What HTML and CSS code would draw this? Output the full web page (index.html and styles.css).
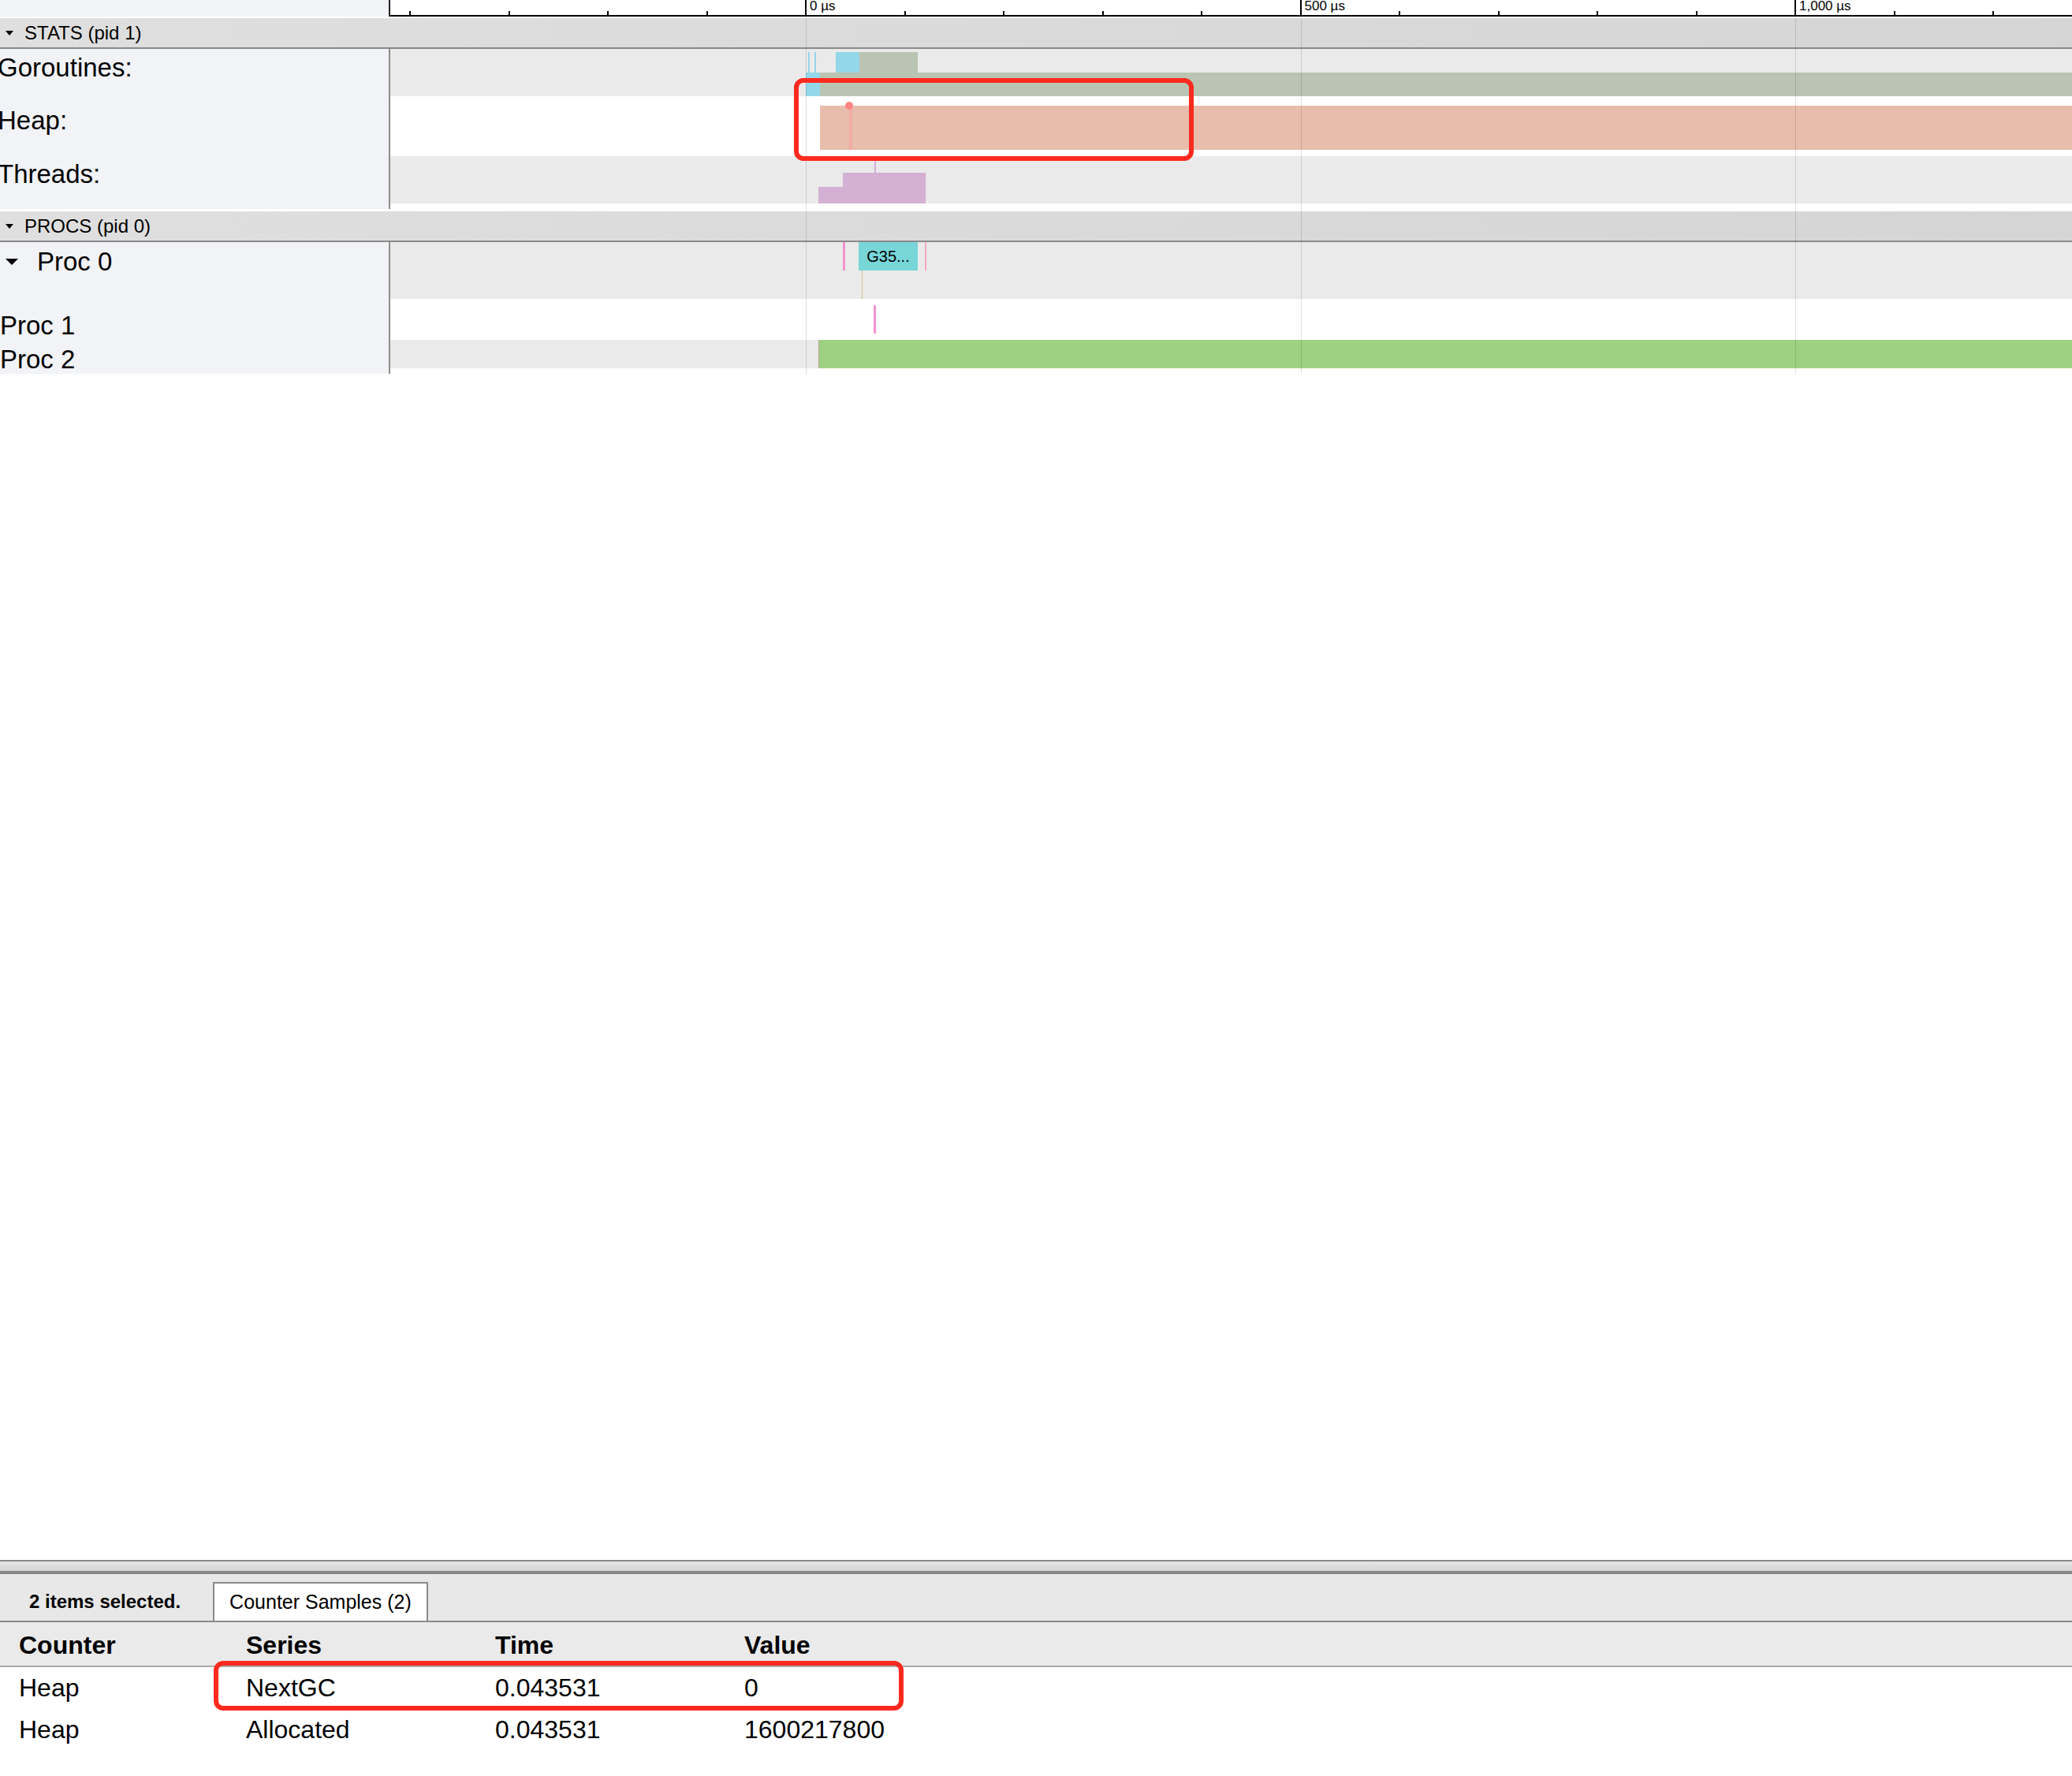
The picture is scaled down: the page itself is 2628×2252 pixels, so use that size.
FILE: index.html
```html
<!DOCTYPE html>
<html lang="en">
<head>
    <meta charset="UTF-8">
    <meta name="viewport" content="width=device-width, initial-scale=1.0">
    <title>Trace Viewer</title>
    <link rel="stylesheet" href="styles.css">
</head>
<body>
    <!-- Timeline -->
    <div class="timeline">
        <div class="ruler">
            <div class="ruler-gutter"></div>
            <div class="ruler-track">
                <span class="tick" style="left:25px"></span>
                <span class="tick" style="left:150.5px"></span>
                <span class="tick" style="left:276px"></span>
                <span class="tick" style="left:401.5px"></span>
                <span class="tick major" style="left:527px"><span class="tick-label">0 µs</span></span>
                <span class="tick" style="left:652.5px"></span>
                <span class="tick" style="left:778px"></span>
                <span class="tick" style="left:903.5px"></span>
                <span class="tick" style="left:1029px"></span>
                <span class="tick major" style="left:1154.5px"><span class="tick-label">500 µs</span></span>
                <span class="tick" style="left:1280px"></span>
                <span class="tick" style="left:1405.5px"></span>
                <span class="tick" style="left:1531px"></span>
                <span class="tick" style="left:1656.5px"></span>
                <span class="tick major" style="left:1782px"><span class="tick-label">1,000 µs</span></span>
                <span class="tick" style="left:1907.5px"></span>
                <span class="tick" style="left:2033px"></span>
            </div>
        </div>

        <!-- STATS process -->
        <div class="process-header stats"><span class="caret"></span>STATS (pid 1)</div>

        <div class="track goroutines">
            <div class="track-label"><span class="track-name">Goroutines:</span></div>
            <div class="track-body shade">
                <div class="slice blue" style="left:530px;top:4px;width:2px;height:26px"></div>
                <div class="slice blue" style="left:538px;top:4px;width:2px;height:26px"></div>
                <div class="slice blue" style="left:565px;top:4px;width:30px;height:26px"></div>
                <div class="slice sage" style="left:595px;top:4px;width:74px;height:26px"></div>
                <div class="slice blue" style="left:527px;top:30px;width:18px;height:30px"></div>
                <div class="slice sage" style="left:545px;right:0;top:30px;height:30px"></div>
            </div>
        </div>

        <div class="track heap">
            <div class="track-label"><span class="track-name">Heap:</span></div>
            <div class="track-body">
                <div class="slice salmon" style="left:545px;right:0;top:12px;height:56px"></div>
                <div class="slice sample-line" style="left:582px;top:12px;width:4px;height:56px"></div>
                <div class="sample-dot" style="left:577px;top:7px"></div>
            </div>
        </div>

        <div class="track threads">
            <div class="track-label"><span class="track-name">Threads:</span></div>
            <div class="track-body shade">
                <div class="slice lilac" style="left:614px;top:0;width:2px;height:21px"></div>
                <div class="slice lilac" style="left:543px;top:39px;width:31px;height:21px"></div>
                <div class="slice lilac" style="left:574px;top:21px;width:105px;height:39px"></div>
            </div>
        </div>

        <div class="track gap">
            <div class="track-label"></div>
            <div class="track-body"></div>
        </div>

        <!-- PROCS process -->
        <div class="process-header"><span class="caret"></span>PROCS (pid 0)</div>

        <div class="track proc0">
            <div class="track-label">
                <span class="track-name expandable"><span class="caret large"></span>Proc 0</span>
            </div>
            <div class="track-body shade">
                <div class="slice pink" style="left:574px;top:0;width:3px;height:36px"></div>
                <div class="slice teal named" style="left:594px;top:0;width:75px;height:36px">G35...</div>
                <div class="slice pale-pink" style="left:678px;top:0;width:2px;height:36px"></div>
                <div class="slice tan" style="left:598px;top:36px;width:1px;height:36px"></div>
            </div>
        </div>

        <div class="track proc1">
            <div class="track-label"><span class="track-name">Proc 1</span></div>
            <div class="track-body">
                <div class="slice pink" style="left:613px;top:8px;width:3px;height:36px"></div>
            </div>
        </div>

        <div class="track proc2">
            <div class="track-label"><span class="track-name">Proc 2</span></div>
            <div class="track-body shade">
                <div class="slice green" style="left:543px;right:0;top:0;height:36px"></div>
            </div>
        </div>

        <div class="track tail">
            <div class="track-label"></div>
            <div class="track-body"></div>
        </div>

        <!-- grid lines and annotation -->
        <div class="gridline" style="left:1022px"></div>
        <div class="gridline" style="left:1650px"></div>
        <div class="gridline" style="left:2277px"></div>
        <div class="highlight highlight-heap"></div>
    </div>

    <!-- Selection details panel -->
    <div class="panel">
        <div class="panel-handle"></div>
        <div class="tab-strip">
            <div class="selection-summary">2 items selected.</div>
            <div class="tab">Counter Samples (2)</div>
        </div>
        <div class="details-head">
            <div class="cell">Counter</div>
            <div class="cell">Series</div>
            <div class="cell">Time</div>
            <div class="cell">Value</div>
        </div>
        <div class="details-row">
            <div class="cell">Heap</div>
            <div class="cell">NextGC</div>
            <div class="cell">0.043531</div>
            <div class="cell">0</div>
        </div>
        <div class="details-row">
            <div class="cell">Heap</div>
            <div class="cell">Allocated</div>
            <div class="cell">0.043531</div>
            <div class="cell">1600217800</div>
        </div>
        <div class="highlight highlight-row"></div>
    </div>
</body>
</html>
```

FILE: styles.css
```css
body {
    margin: 0;
    width: 2628px;
    height: 2252px;
    display: flex;
    flex-direction: column;
    overflow: hidden;
    background: #fff;
    color: #000;
    font-family: "Liberation Sans", Arial, sans-serif;
}

/* Timeline */
.timeline {
    position: relative;
    flex: none;
}

.ruler {
    display: flex;
    height: 21px;
}

.ruler-gutter {
    width: 493px;
    flex: none;
    background: #f2f3f7;
    border-right: 2px solid #222;
}

.ruler-track {
    flex: 1;
    position: relative;
    overflow: hidden;
    border-bottom: 2px solid #000;
}

.tick {
    position: absolute;
    bottom: 0;
    width: 2px;
    height: 5px;
    margin-left: -1px;
    background: #000;
}

.tick.major {
    height: 19px;
}

.tick-label {
    position: absolute;
    left: 6px;
    top: 0;
    font-size: 17px;
    line-height: 15px;
    white-space: nowrap;
}

.process-header {
    display: flex;
    align-items: center;
    height: 37px;
    padding-left: 7px;
    border-bottom: 2px solid #898989;
    background: linear-gradient(to right, #dfdfdf, #d5d5d5);
    font-size: 24px;
}

.process-header.stats {
    margin-top: 2px;
}

.caret {
    width: 0;
    height: 0;
    border-left: 5.5px solid transparent;
    border-right: 5.5px solid transparent;
    border-top: 6px solid #000;
    margin-right: 14px;
}

.caret.large {
    border-left-width: 8.5px;
    border-right-width: 8.5px;
    border-top-width: 8px;
    margin-right: 24px;
}

.track {
    display: flex;
}

.track-label {
    width: 493px;
    flex: none;
    overflow: hidden;
    background: #f2f3f7;
    border-right: 2px solid #8c8c8c;
}

.track-name {
    display: block;
    margin-left: -3px;
    font-size: 33px;
    line-height: 33px;
    white-space: nowrap;
}

.track-name.expandable {
    display: flex;
    align-items: center;
    margin-left: 7px;
}

.track-body {
    flex: 1;
    position: relative;
    overflow: hidden;
}

.track-body.shade {
    background: #eaeaea;
}

.goroutines { height: 60px; }
.goroutines .track-name { padding-top: 7px; }

.heap { height: 76px; }
.heap .track-name { padding-top: 14px; }

.threads { height: 60px; }
.threads .track-name { padding-top: 6px; }

.gap {
    height: 7px;
    margin-bottom: 3px;
}

.proc0 { height: 72px; }
.proc0 .track-name { padding-top: 8px; }

.proc1 { height: 52px; }
.proc1 .track-name { padding-top: 17px; margin-left: 0; }

.proc2 { height: 36px; }
.proc2 .track-name { padding-top: 8px; margin-left: 0; }

.tail { height: 7px; }

/* Slices */
.slice {
    position: absolute;
}

.slice.blue { background: #94d6ea; }
.slice.sage { background: #bac4b2; }
.slice.salmon { background: #e8bdab; }
.slice.sample-line { background: rgba(255, 150, 150, 0.45); }
.slice.lilac { background: #d4b0d4; }
.slice.pink { background: #f393cf; }
.slice.pale-pink { background: #f5a9bc; }
.slice.teal { background: #78d6d9; }
.slice.tan { background: #d4bf94; }

.slice.green {
    background: #9fd183;
    border-left: 1px solid #b8a08c;
}

.slice.named {
    display: flex;
    align-items: center;
    justify-content: center;
    font-size: 20px;
}

.sample-dot {
    position: absolute;
    width: 10px;
    height: 10px;
    border-radius: 50%;
    background: #ff8585;
}

.gridline {
    position: absolute;
    top: 23px;
    bottom: 0;
    width: 1px;
    background: rgba(0, 0, 0, 0.12);
    pointer-events: none;
}

.highlight {
    position: absolute;
    box-sizing: border-box;
    border: 6px solid #ff2a1f;
    border-radius: 12px;
    pointer-events: none;
}

.highlight-heap {
    left: 1007px;
    top: 99px;
    width: 507px;
    height: 105px;
}

/* Details panel */
.panel {
    position: relative;
    flex: none;
    height: 274px;
    margin-top: auto;
}

.panel-handle {
    height: 12px;
    border-top: 2px solid #8a8a8a;
    border-bottom: 4px solid #878787;
    background: linear-gradient(#e7e7e7, #d3d3d3);
}

.tab-strip {
    display: flex;
    align-items: flex-end;
    height: 59px;
    padding-left: 37px;
    background: #e8e8e8;
    border-bottom: 2px solid #8a8a8a;
}

.selection-summary {
    margin-right: 41px;
    font-size: 24px;
    font-weight: bold;
    line-height: 49px;
}

.tab {
    height: 47px;
    padding: 0 19px;
    border: 2px solid #8a8a8a;
    border-bottom: 0;
    background: #fff;
    font-size: 25px;
    line-height: 47px;
}

.details-head,
.details-row {
    display: grid;
    grid-template-columns: 288px 316px 316px 1fr;
    align-items: center;
    font-size: 32px;
}

.details-head {
    box-sizing: border-box;
    height: 57px;
    padding-top: 3px;
    background: #eaeaea;
    border-bottom: 2px solid #a9a9a9;
    font-weight: bold;
}

.details-row {
    height: 53px;
}

.cell {
    padding-left: 24px;
    white-space: nowrap;
}

.highlight-row {
    left: 271px;
    top: 128px;
    width: 875px;
    height: 63px;
}
```
